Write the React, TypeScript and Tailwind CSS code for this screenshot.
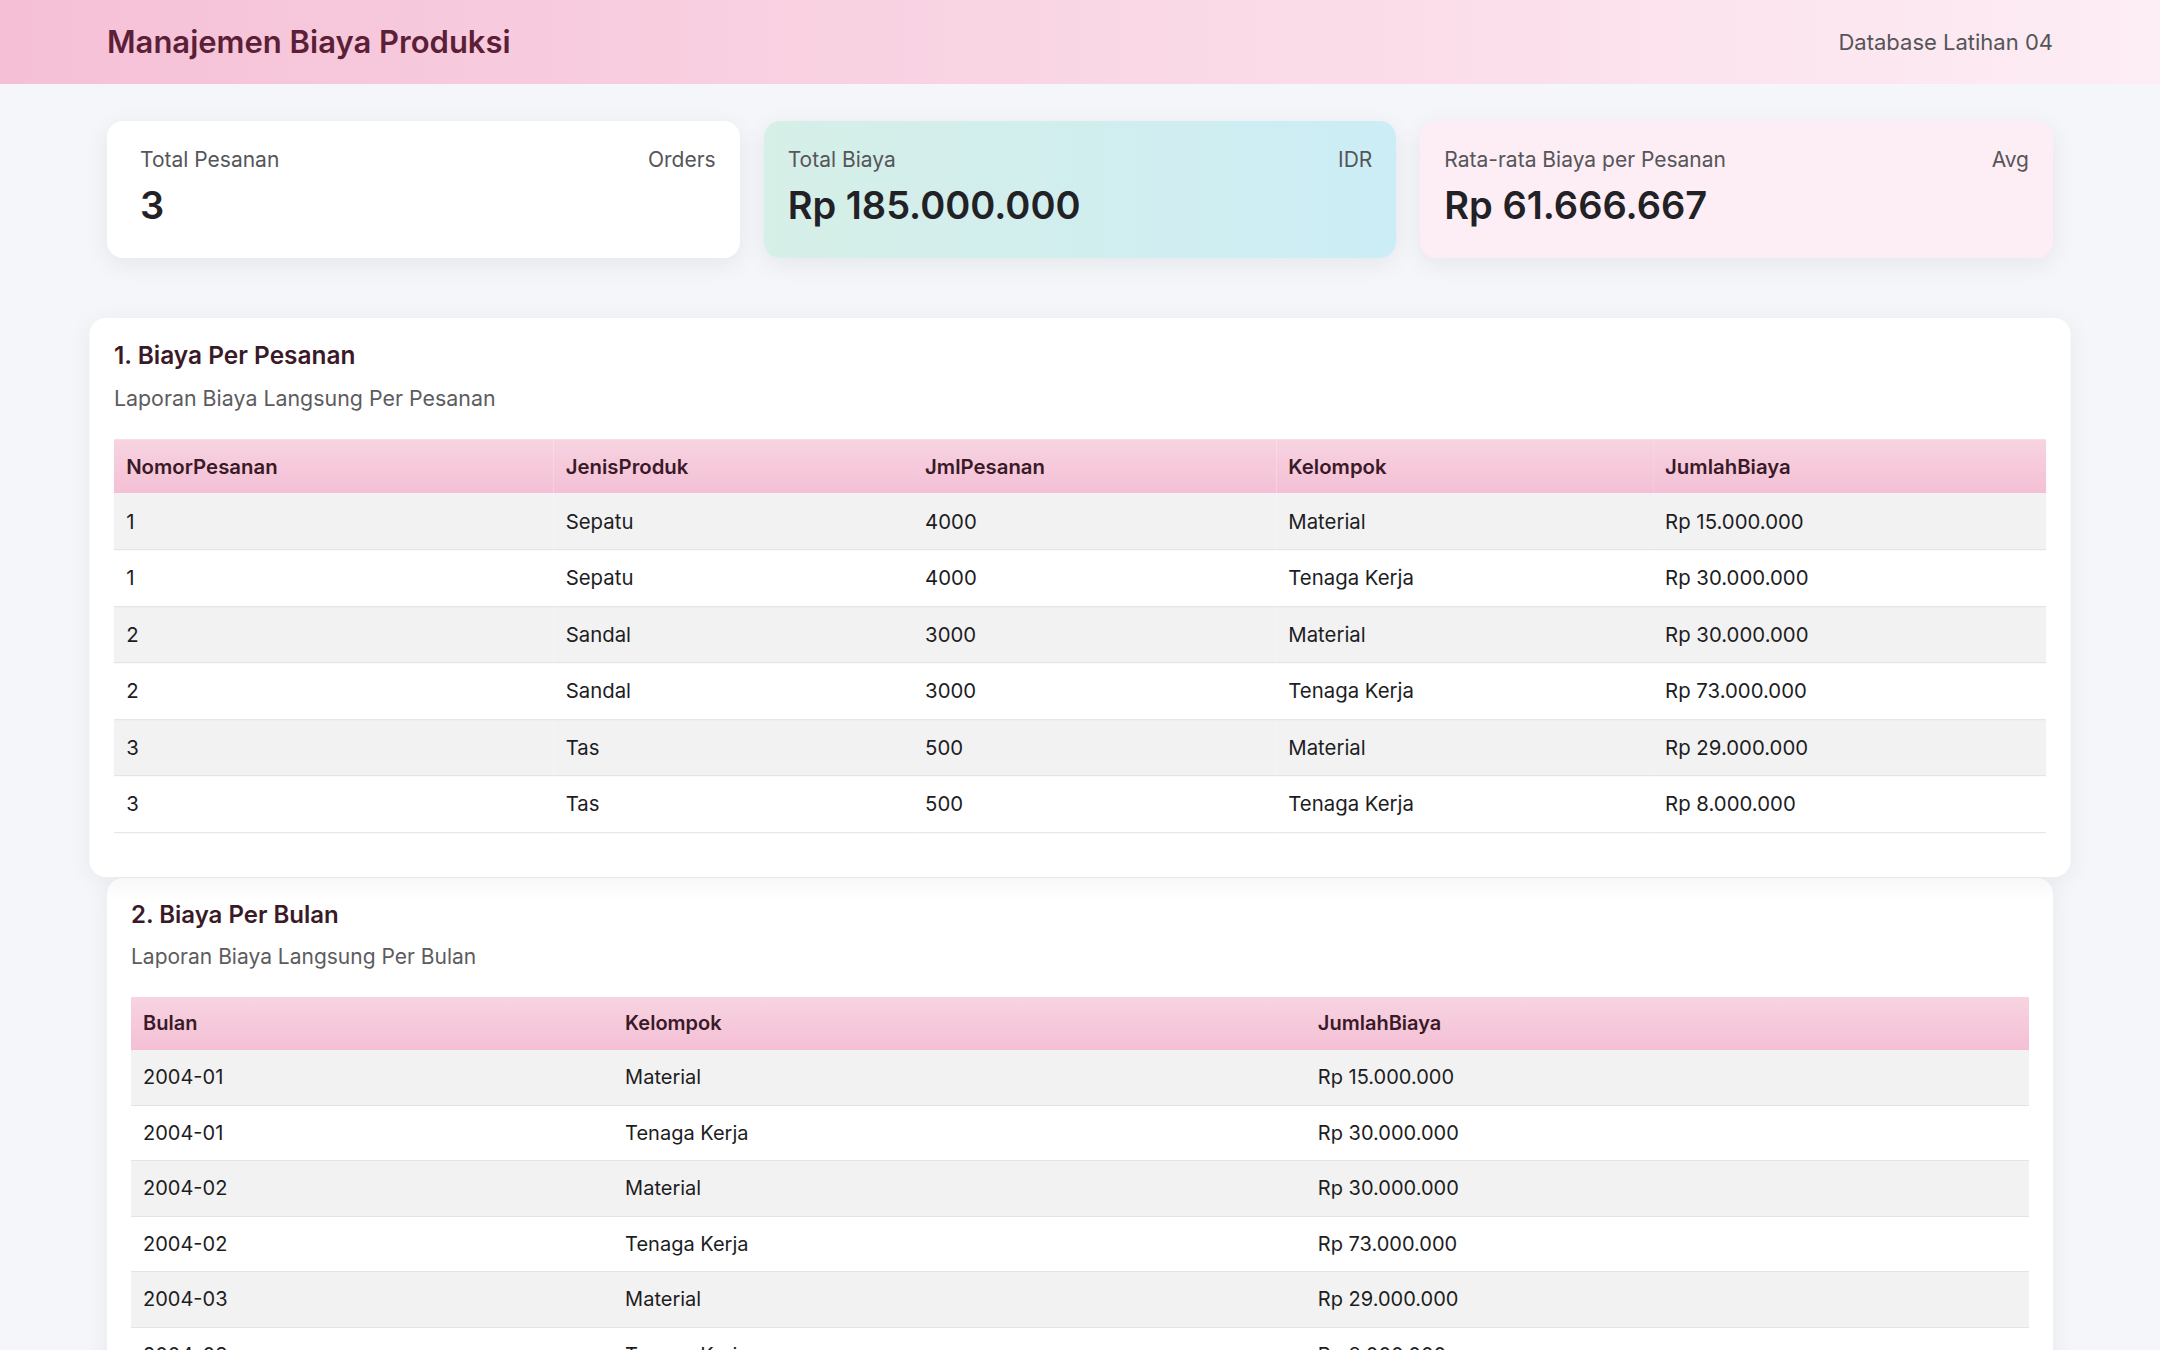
const stats = [
  {
    label: "Total Pesanan",
    tag: "Orders",
    value: "3",
    className: "bg-white pl-[33px]",
  },
  {
    label: "Total Biaya",
    tag: "IDR",
    value: "Rp 185.000.000",
    className: "bg-gradient-to-r from-[#d6efe7] to-[#ccedf6] pl-6",
  },
  {
    label: "Rata-rata Biaya per Pesanan",
    tag: "Avg",
    value: "Rp 61.666.667",
    className: "bg-[#fdedf4] pl-6",
  },
];

const perPesanan = [
  ["1", "Sepatu", "4000", "Material", "Rp 15.000.000"],
  ["1", "Sepatu", "4000", "Tenaga Kerja", "Rp 30.000.000"],
  ["2", "Sandal", "3000", "Material", "Rp 30.000.000"],
  ["2", "Sandal", "3000", "Tenaga Kerja", "Rp 73.000.000"],
  ["3", "Tas", "500", "Material", "Rp 29.000.000"],
  ["3", "Tas", "500", "Tenaga Kerja", "Rp 8.000.000"],
];

const perBulan = [
  ["2004-01", "Material", "Rp 15.000.000"],
  ["2004-01", "Tenaga Kerja", "Rp 30.000.000"],
  ["2004-02", "Material", "Rp 30.000.000"],
  ["2004-02", "Tenaga Kerja", "Rp 73.000.000"],
  ["2004-03", "Material", "Rp 29.000.000"],
  ["2004-03", "Tenaga Kerja", "Rp 8.000.000"],
];

type ReportProps = {
  title: string;
  subtitle: string;
  columns: { name: string; width: string }[];
  rows: string[][];
  className?: string;
};

function Report({ title, subtitle, columns, rows, className = "" }: ReportProps) {
  return (
    <section
      className={`rounded-2xl bg-white px-6 pt-6 pb-[43px] shadow-[0_4px_24px_rgba(30,30,60,0.06)] ${className}`}
    >
      <h2 className="text-[24px] leading-[26px] font-semibold text-[#3a1a28]">
        {title}
      </h2>
      <p className="mt-[14px] text-[21px] leading-[30px] text-[#5c5c60]">
        {subtitle}
      </p>
      <table className="mt-[25px] w-full table-fixed border-collapse text-left">
        <colgroup>
          {columns.map((col) => (
            <col key={col.name} style={{ width: col.width }} />
          ))}
        </colgroup>
        <thead>
          <tr className="h-[53px] bg-gradient-to-b from-[#f7d4e1] to-[#f4bfd5]">
            {columns.map((col) => (
              <th
                key={col.name}
                className="px-3 text-[20px] font-semibold text-[#3a1a28]"
              >
                {col.name}
              </th>
            ))}
          </tr>
        </thead>
        <tbody>
          {rows.map((row, i) => (
            <tr
              key={i}
              className={`h-[55.5px] border-b border-[#e2e2e8] ${
                i % 2 === 0 ? "bg-[#f2f2f2]" : "bg-white"
              }`}
            >
              {row.map((cell, j) => (
                <td key={j} className="px-3 text-[20px] text-[#1d1d1f]">
                  {cell}
                </td>
              ))}
            </tr>
          ))}
        </tbody>
      </table>
    </section>
  );
}

export default function App() {
  return (
    <div className="min-h-screen bg-[#f5f6f9] font-['Inter','Noto_Sans',sans-serif]">
      <header className="flex h-[84px] items-center justify-between bg-gradient-to-r from-[#f5c0d6] to-[#fdedf4] px-[107px]">
        <h1 className="text-[31px] font-semibold text-[#5b1f37]">
          Manajemen Biaya Produksi
        </h1>
        <span className="text-[22px] text-[#555559]">Database Latihan 04</span>
      </header>

      <main className="px-[107px] pt-[37px] pb-16">
        <div className="grid grid-cols-3 gap-6">
          {stats.map((s) => (
            <div
              key={s.label}
              className={`h-[137px] rounded-2xl pr-6 pt-[26px] shadow-[0_6px_24px_rgba(30,30,60,0.07)] ${s.className}`}
            >
              <div className="flex items-center justify-between text-[21px] leading-[26px] text-[#55555a]">
                <span>{s.label}</span>
                <span>{s.tag}</span>
              </div>
              <div className="mt-2 text-[38px] leading-[48px] font-semibold text-[#222226]">
                {s.value}
              </div>
            </div>
          ))}
        </div>

        <div className="mt-[65px] flex flex-col gap-[6px]">
          <Report
            className="scale-[1.018]"
            title="1. Biaya Per Pesanan"
            subtitle="Laporan Biaya Langsung Per Pesanan"
            columns={[
              { name: "NomorPesanan", width: "22.75%" },
              { name: "JenisProduk", width: "18.6%" },
              { name: "JmlPesanan", width: "18.8%" },
              { name: "Kelompok", width: "19.5%" },
              { name: "JumlahBiaya", width: "20.35%" },
            ]}
            rows={perPesanan}
          />
          <Report
            title="2. Biaya Per Bulan"
            subtitle="Laporan Biaya Langsung Per Bulan"
            columns={[
              { name: "Bulan", width: "25.4%" },
              { name: "Kelompok", width: "36.5%" },
              { name: "JumlahBiaya", width: "38.1%" },
            ]}
            rows={perBulan}
          />
        </div>
      </main>
    </div>
  );
}
